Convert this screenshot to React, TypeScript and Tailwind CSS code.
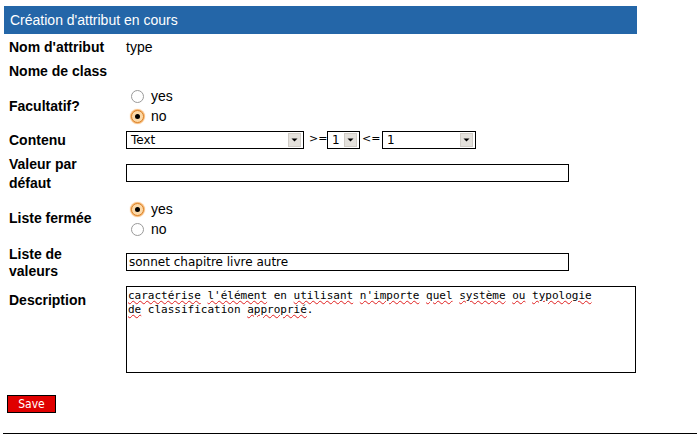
import type { ReactNode } from 'react'

const label = "font-['Liberation_Sans',Arial,sans-serif] font-bold text-[14px] text-black"
const field = "font-['DejaVu_Sans',sans-serif] text-[12px] text-black"

function Radio({ checked }: { checked?: boolean }) {
  if (!checked) {
    return <span className="inline-block w-[13px] h-[13px] rounded-full border border-[#9a9a9a] bg-white shrink-0" />
  }
  return (
    <span className="relative inline-block w-[13px] h-[13px] rounded-full border border-[#d9822b] bg-[#fcd9a8] shadow-[0_0_1px_1px_#f7b36a] shrink-0">
      <span className="absolute left-[3px] top-[3px] w-[5px] h-[5px] rounded-full bg-black" />
    </span>
  )
}

function RadioLine({ text, checked }: { text: string; checked?: boolean }) {
  return (
    <div className="flex items-center h-[20px] pl-[5px] gap-[7px]">
      <Radio checked={checked} />
      <span className="font-['Liberation_Sans',Arial,sans-serif] text-[14px] text-black">{text}</span>
    </div>
  )
}

function Select({ value, width }: { value: string; width: string }) {
  return (
    <div className={`flex items-center h-[18px] border border-black bg-white ${width}`}>
      <span className={`flex-1 pl-[4px] leading-none ${field}`}>{value}</span>
      <span className="flex items-center justify-center w-[13px] h-[14px] mr-[2px] bg-[#e4e1dc] border border-[#d0ccc6]">
        <svg width="7" height="4" viewBox="0 0 7 4">
          <path d="M0.5 0.5 L6.5 0.5 L3.5 3.5 Z" fill="#000" />
        </svg>
      </span>
    </div>
  )
}

function Row({ h, name, children, top }: { h: string; name: ReactNode; children?: ReactNode; top?: boolean }) {
  return (
    <div className={`flex ${top ? 'items-start' : 'items-center'} ${h}`}>
      <div className={`w-[122px] pl-[5px] shrink-0 ${top ? 'pt-[7px]' : 'pt-[2px]'} ${label}`}>{name}</div>
      <div className={`flex-1 ${top ? 'pt-[3px]' : ''}`}>{children}</div>
    </div>
  )
}

const wavy = 'underline decoration-wavy decoration-[#e02020] decoration-[1px] underline-offset-[1px]'

export default function App() {
  return (
    <div className="w-[697px] h-[435px] bg-white overflow-hidden">
      <div className="ml-[4px] pt-[6px] w-[633px]">
        <div className="h-[28px] bg-[#2466a8] flex items-center pl-[6px] font-['Liberation_Sans',Arial,sans-serif] text-[14px] text-white">
          Création d'attribut en cours
        </div>

        <Row h="h-[24px]" name="Nom d'attribut">
          <div className="pt-[2px] font-['Liberation_Sans',Arial,sans-serif] text-[14px] text-black">type</div>
        </Row>
        <Row h="h-[25px]" name="Nome de class" />
        <Row h="h-[44px]" name="Facultatif?">
          <div className="pt-[3px]">
            <RadioLine text="yes" />
            <RadioLine text="no" checked />
          </div>
        </Row>
        <Row h="h-[25px]" name="Contenu">
          <div className="flex items-center">
            <Select value="Text" width="w-[178px]" />
            <span className="w-[23px] pl-[5px] font-['DejaVu_Sans',sans-serif] text-[11px] text-black">&gt;=</span>
            <Select value="1" width="w-[33px]" />
            <span className="w-[22px] pl-[2px] font-['DejaVu_Sans',sans-serif] text-[11px] text-black">&lt;=</span>
            <Select value="1" width="w-[94px]" />
          </div>
        </Row>
        <Row h="h-[42px]" name={<div className="leading-[19px]">Valeur par<br />défaut</div>}>
          <div className="w-[443px] h-[18px] border border-black bg-white" />
        </Row>
        <Row h="h-[46px]" name="Liste fermée">
          <div className="pt-[4px]">
            <RadioLine text="yes" checked />
            <RadioLine text="no" />
          </div>
        </Row>
        <Row h="h-[43px]" name={<div className="leading-[17px]">Liste de<br />valeurs</div>}>
          <div className={`w-[443px] h-[18px] border border-black bg-white flex items-center pl-[2px] ${field}`}>
            sonnet chapitre livre autre
          </div>
        </Row>
        <Row h="h-[93px]" top name="Description">
          <div className="w-[510px] h-[87px] border border-black bg-white px-[1px] pt-[2px] font-['DejaVu_Sans_Mono',monospace] text-[11px] leading-[14px] text-black">
            <span className={wavy}>caractérise</span> <span className={wavy}>l'élément</span> en{' '}
            <span className={wavy}>utilisant</span> <span className={wavy}>n'importe</span>{' '}
            <span className={wavy}>quel</span> <span className={wavy}>système</span>{' '}
            <span className={wavy}>ou</span> <span className={wavy}>typologie</span>
            <br />
            <span className={wavy}>de</span> classification <span className={wavy}>approprié</span>.
          </div>
        </Row>

        <div className="mt-[14px] ml-[3px]">
          <button className="w-[49px] h-[18px] bg-[#e00000] border border-black text-white font-['DejaVu_Sans_Condensed','DejaVu_Sans',sans-serif] text-[12px] leading-none">
            Save
          </button>
        </div>
      </div>
      <div className="mt-[19px] ml-[3px] border-t border-black" />
    </div>
  )
}
